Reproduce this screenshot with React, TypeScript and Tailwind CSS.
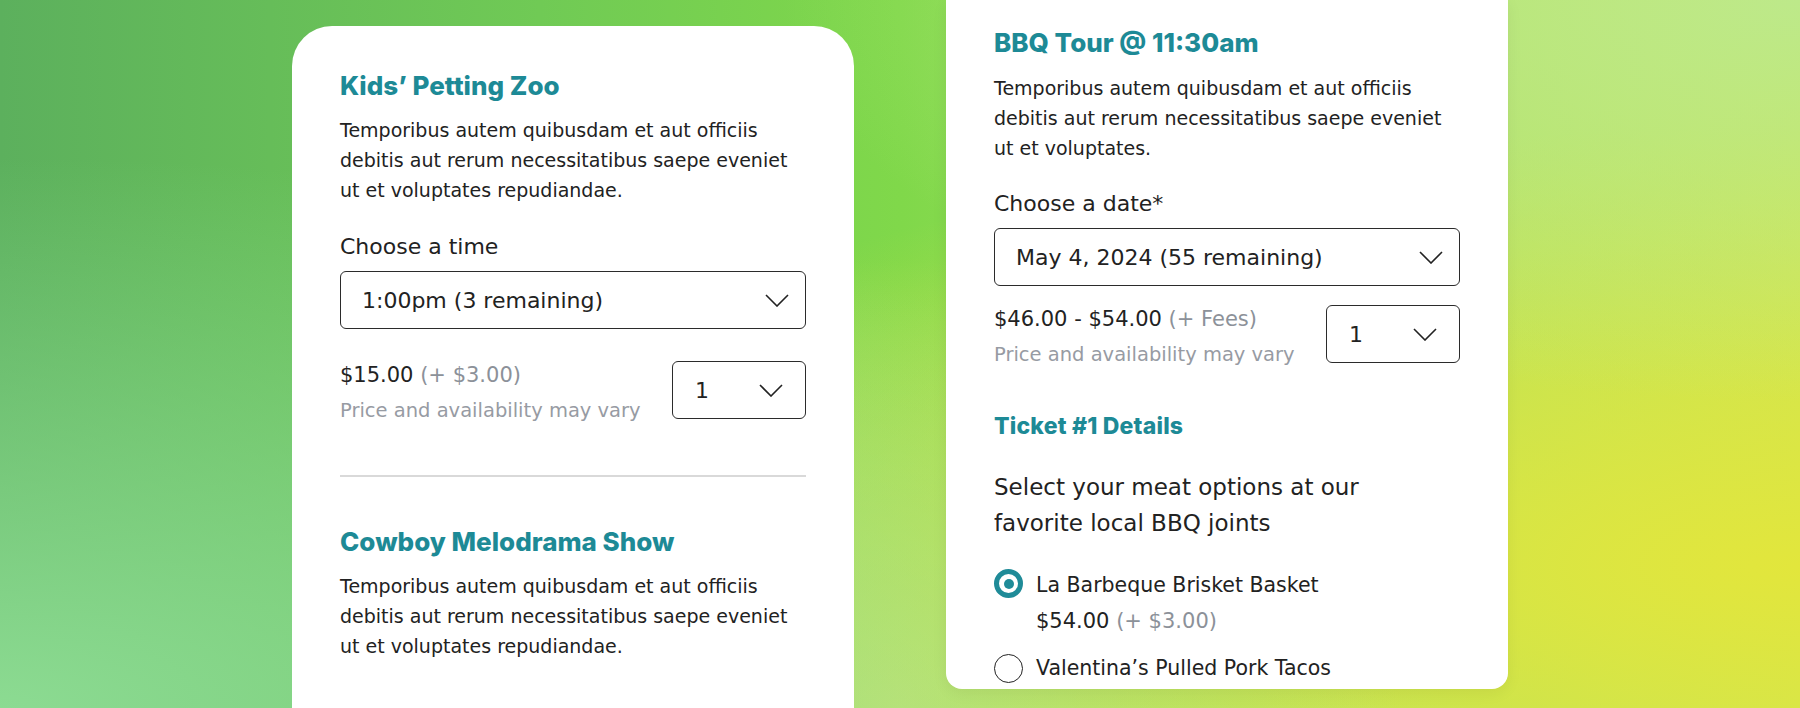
import React from 'react';

const body = { fontFamily: '"DejaVu Sans", "Noto Sans", sans-serif' };
const head = 'font-[Inter,_sans-serif] font-extrabold text-[#1d8a96]';

function Chevron() {
  return (
    <svg width="24" height="13" viewBox="0 0 24 13" fill="none" className="shrink-0">
      <path d="M1 1l11 11L23 1" stroke="#222" strokeWidth="1.6" />
    </svg>
  );
}

function Select({ value }: { value: string }) {
  return (
    <div className="flex h-[58px] items-center justify-between rounded-[6px] border-[1.5px] border-[#2b2b2b] pl-[21px] pr-[16px] text-[22px] text-[#222]">
      <span>{value}</span>
      <Chevron />
    </div>
  );
}

function Qty() {
  return (
    <div className="flex h-[58px] w-[134px] shrink-0 items-center justify-between rounded-[6px] border-[1.5px] border-[#2b2b2b] px-[22px] text-[22px] text-[#222]">
      <span>1</span>
      <Chevron />
    </div>
  );
}

function PriceRow({ price, extra }: { price: string; extra: string }) {
  return (
    <div className="flex items-start justify-between gap-4">
      <div>
        <div className="text-[21px] leading-[28px] text-[#222]">
          {price} <span className="text-[#8c9199]">{extra}</span>
        </div>
        <div className="mt-2 text-[19.5px] leading-[28px] text-[#979ba3]">Price and availability may vary</div>
      </div>
      <Qty />
    </div>
  );
}

const lorem = 'Temporibus autem quibusdam et aut officiis debitis aut rerum necessitatibus saepe eveniet ut et voluptates';

export default function App() {
  return (
    <div
      style={body}
      className="flex h-[708px] w-full justify-center gap-[92px] overflow-hidden bg-[radial-gradient(ellipse_at_0%_100%,#8cdb92_0%,transparent_55%),radial-gradient(ellipse_at_100%_0%,#bde98a_0%,transparent_40%),radial-gradient(ellipse_at_100%_80%,#e2e63c_0%,transparent_55%),radial-gradient(ellipse_at_50%_100%,#c4e67e_0%,transparent_45%),linear-gradient(90deg,#5cb05d_0%,#70ca55_30%,#80d84a_50%,#a8e063_75%,#c8e65a_100%)]"
    >
      {/* left card */}
      <div className="mt-[26px] w-[562px] shrink-0 rounded-t-[40px] bg-white px-12 pt-[44px]">
        <h2 className={`${head} text-[26px] leading-[32px]`}>Kids’ Petting Zoo</h2>
        <p className="mt-[13px] text-[19px] leading-[30px] text-[#222]">{lorem} repudiandae.</p>
        <div className="mt-[27px] text-[22px] leading-[30px] text-[#222]">Choose a time</div>
        <div className="mt-[9px]">
          <Select value="1:00pm (3 remaining)" />
        </div>
        <div className="mt-[32px]">
          <PriceRow price="$15.00" extra="(+ $3.00)" />
        </div>
        <div className="mt-[50px] h-[2px] bg-[#d9d9d9]" />
        <h2 className={`${head} mt-[49px] text-[26px] leading-[32px]`}>Cowboy Melodrama Show</h2>
        <p className="mt-[13px] text-[19px] leading-[30px] text-[#222]">{lorem} repudiandae.</p>
        <div className="mt-[44px] text-[21px] leading-[28px] text-[#222]">
          $25.00 <span className="text-[#8c9199]">(+ $3.00)</span>
        </div>
      </div>

      {/* right card */}
      <div className="h-[689px] w-[562px] shrink-0 overflow-hidden rounded-b-[16px] bg-white px-12 pt-[27px] shadow-[0_4px_16px_rgba(0,0,0,0.06)]">
        <h2 className={`${head} text-[26px] leading-[32px]`}>BBQ Tour @ 11:30am</h2>
        <p className="mt-[14px] text-[19px] leading-[30px] text-[#222]">{lorem}.</p>
        <div className="mt-[26px] text-[22px] leading-[30px] text-[#222]">Choose a date*</div>
        <div className="mt-[9px]">
          <Select value="May 4, 2024 (55 remaining)" />
        </div>
        <div className="mt-[19px]">
          <PriceRow price="$46.00 - $54.00" extra="(+ Fees)" />
        </div>
        <h3 className={`${head} mt-[43px] text-[23px] leading-[28px] tracking-[0.2px]`}>Ticket #1 Details</h3>
        <p className="mt-[29px] max-w-[400px] text-[23px] leading-[36px] text-[#222]">
          Select your meat options at our favorite local BBQ joints
        </p>
        <div className="mt-[30px] flex gap-[13px]">
          <span className="mt-[-2px] flex h-[29px] w-[29px] shrink-0 items-center justify-center rounded-full border-[5px] border-[#1f8b98]">
            <span className="h-[10px] w-[10px] rounded-full bg-[#1f8b98]" />
          </span>
          <div>
            <div className="text-[20.5px] leading-[28px] text-[#222]">La Barbeque Brisket Basket</div>
            <div className="mt-2 text-[21px] leading-[28px] text-[#222]">
              $54.00 <span className="text-[#8c9199]">(+ $3.00)</span>
            </div>
          </div>
        </div>
        <div className="mt-[19px] flex gap-[13px]">
          <span className="h-[29px] w-[29px] shrink-0 rounded-full border-[1.5px] border-[#222]" />
          <div className="text-[20.5px] leading-[28px] text-[#222]">Valentina’s Pulled Pork Tacos</div>
        </div>
      </div>
    </div>
  );
}
